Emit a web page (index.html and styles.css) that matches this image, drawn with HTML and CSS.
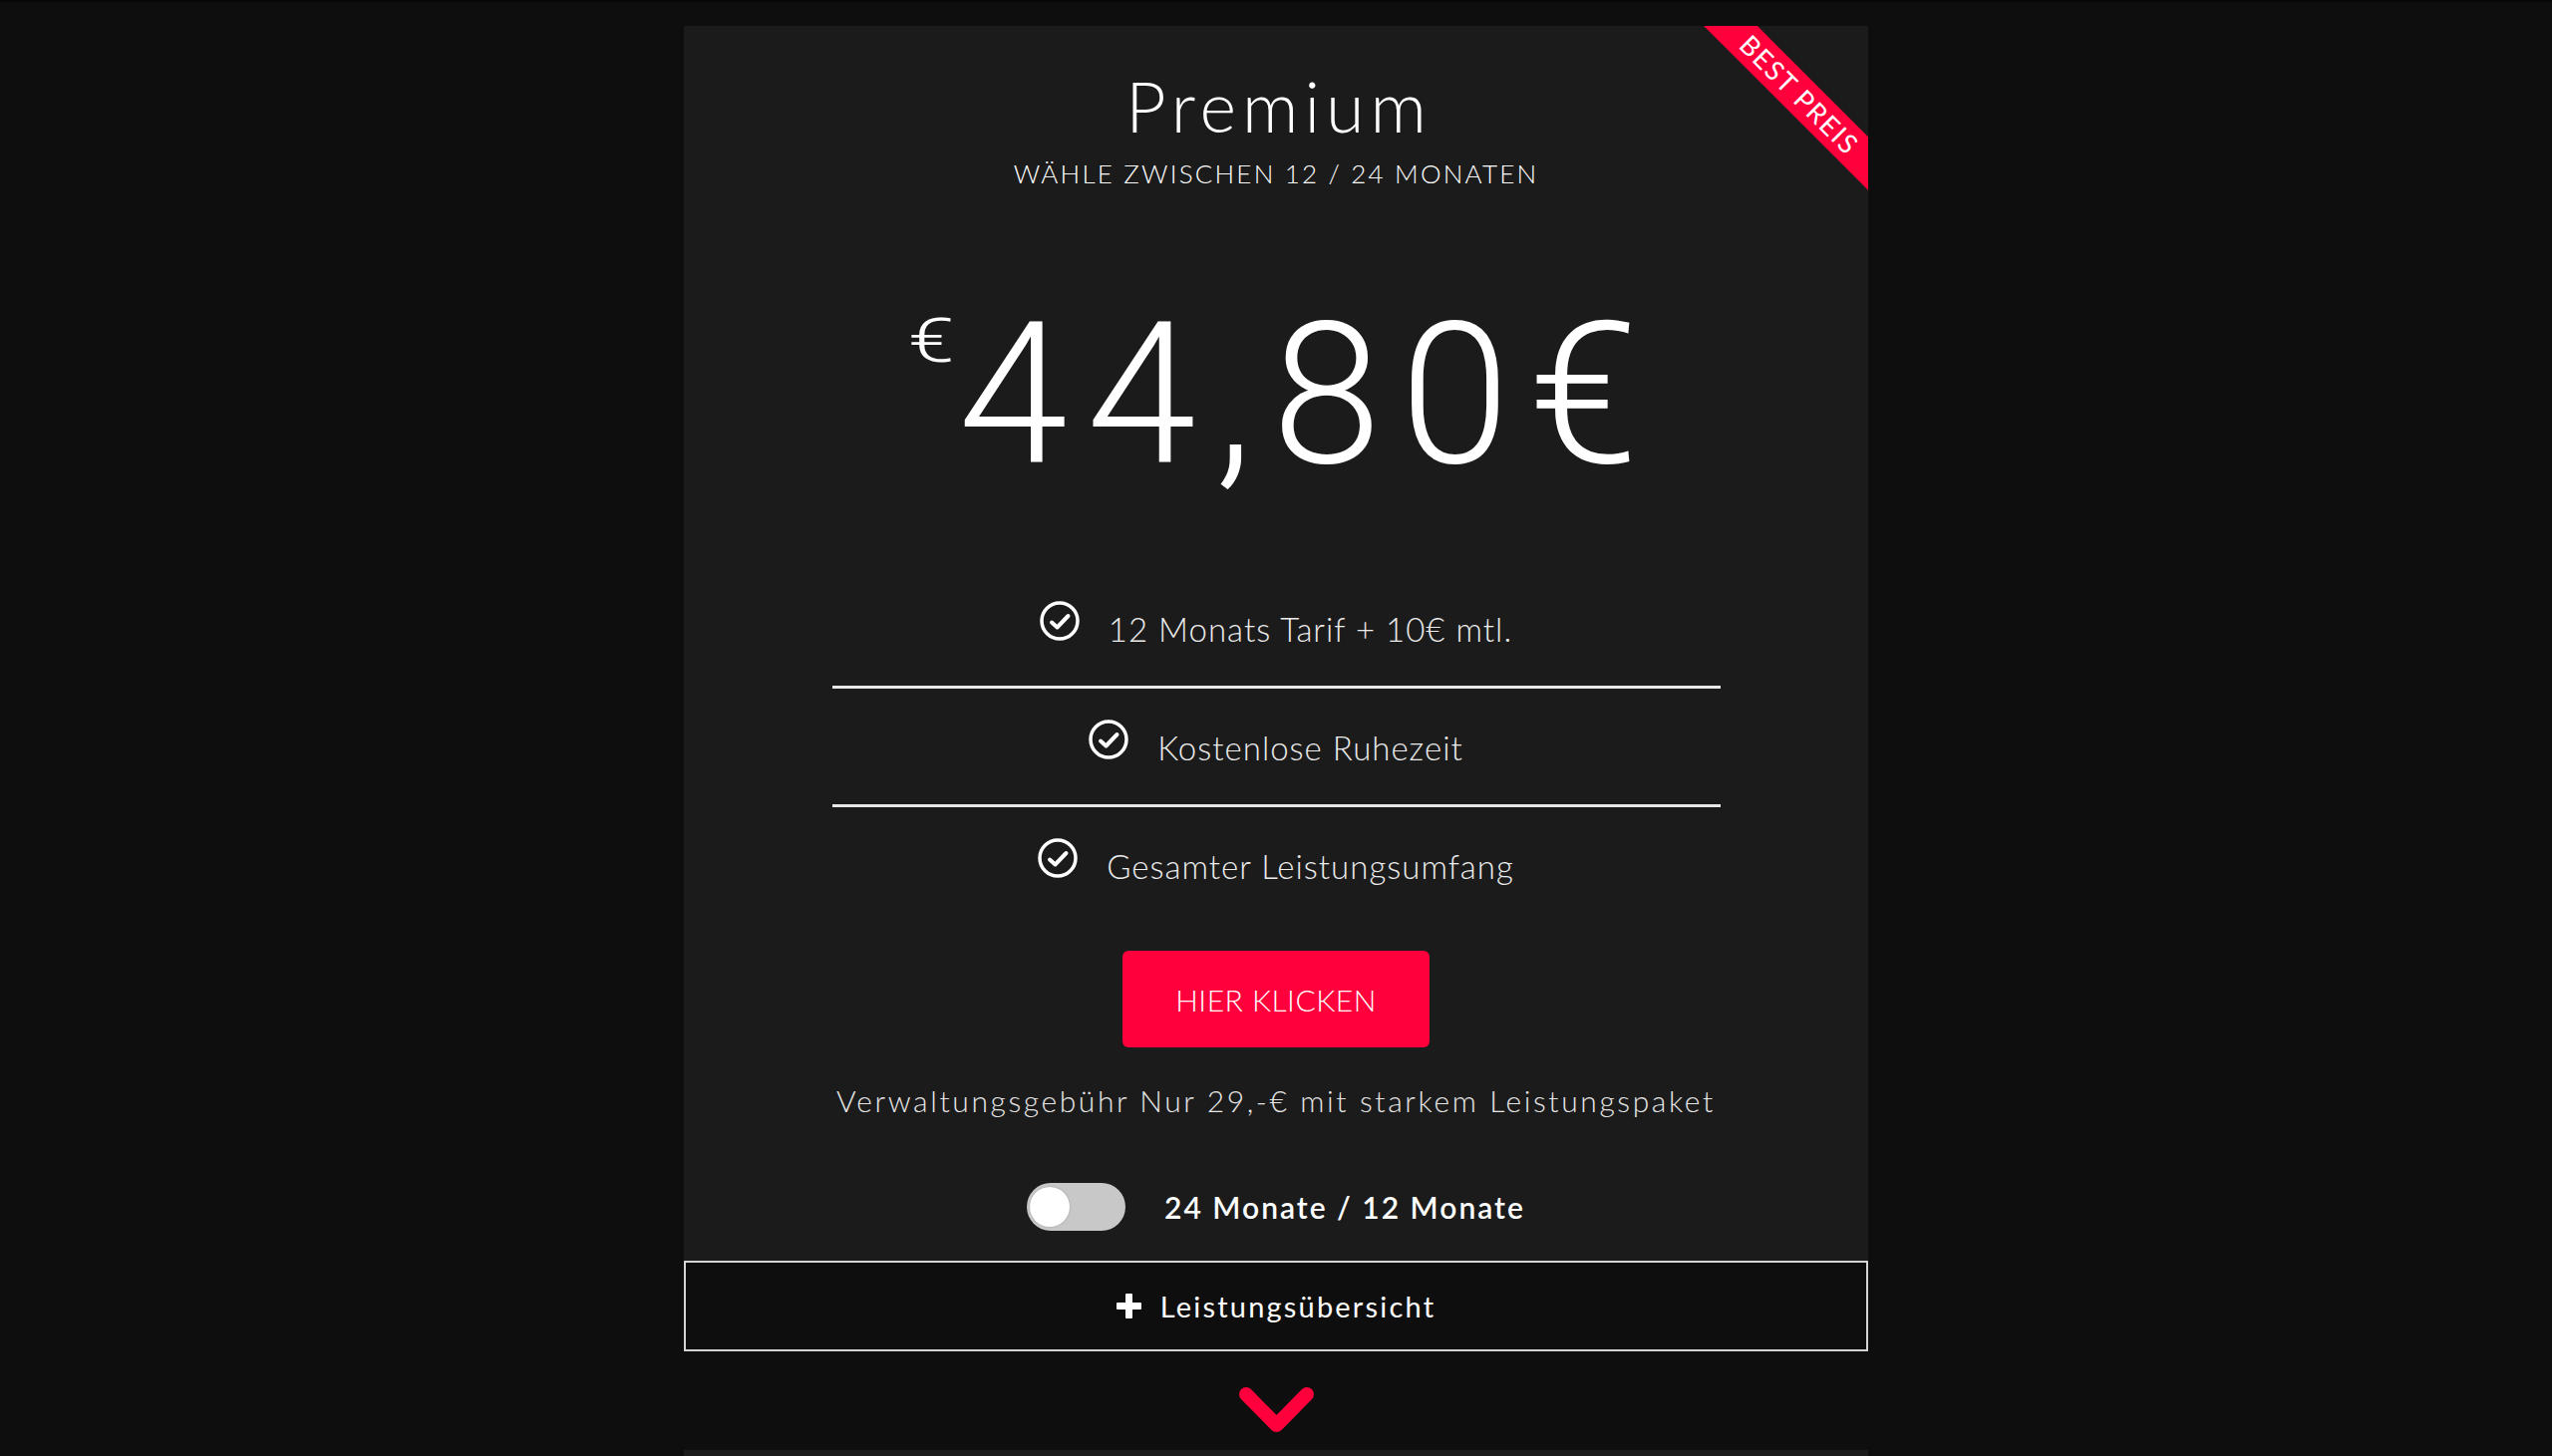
FILE: index.html
```html
<!DOCTYPE html>
<html lang="de">
<head>
<meta charset="utf-8">
<title>Premium</title>
<link rel="stylesheet" href="styles.css">
</head>
<body>
<div class="page">
  <section class="card">
    <div class="ribbon">BEST PREIS</div>
    <h1 class="title">Premium</h1>
    <p class="subtitle">WÄHLE ZWISCHEN 12 / 24 MONATEN</p>
    <div class="price"><span class="cur">€</span><span class="amount">44,80€</span></div>
    <ul class="features">
      <li class="feature">
        <svg class="check" viewBox="0 0 40 40" width="40" height="40"><circle cx="20" cy="20" r="18" fill="none" stroke="#fff" stroke-width="3.5"/><path d="M12 21.5 L17.5 26.5 L28.5 15" fill="none" stroke="#fff" stroke-width="4" stroke-linecap="round" stroke-linejoin="round"/></svg>
        <span class="feature-text">12 Monats Tarif + 10€ mtl.</span>
      </li>
      <li class="feature">
        <svg class="check" viewBox="0 0 40 40" width="40" height="40"><circle cx="20" cy="20" r="18" fill="none" stroke="#fff" stroke-width="3.5"/><path d="M12 21.5 L17.5 26.5 L28.5 15" fill="none" stroke="#fff" stroke-width="4" stroke-linecap="round" stroke-linejoin="round"/></svg>
        <span class="feature-text">Kostenlose Ruhezeit</span>
      </li>
      <li class="feature">
        <svg class="check" viewBox="0 0 40 40" width="40" height="40"><circle cx="20" cy="20" r="18" fill="none" stroke="#fff" stroke-width="3.5"/><path d="M12 21.5 L17.5 26.5 L28.5 15" fill="none" stroke="#fff" stroke-width="4" stroke-linecap="round" stroke-linejoin="round"/></svg>
        <span class="feature-text">Gesamter Leistungsumfang</span>
      </li>
    </ul>
    <a class="cta" href="#">HIER KLICKEN</a>
    <p class="note">Verwaltungsgebühr Nur 29,-€ mit starkem Leistungspaket</p>
    <div class="switch-row">
      <span class="switch"><span class="knob"></span></span>
      <span class="switch-label">24 Monate / 12 Monate</span>
    </div>
  </section>
  <div class="accordion">
    <svg class="plus" viewBox="0 0 25 25" width="25" height="25"><rect x="9" y="0" width="7" height="25" rx="1" fill="#fff"/><rect x="0" y="9" width="25" height="7" rx="1" fill="#fff"/></svg>
    <span class="accordion-label">Leistungsübersicht</span>
  </div>
  <div class="chevron">
    <svg viewBox="0 0 75 46" width="75" height="46"><polyline points="7,7 37.5,38 68,7" fill="none" stroke="#ff003c" stroke-width="14" stroke-linecap="round" stroke-linejoin="round"/></svg>
  </div>
  <section class="card card-next"></section>
</div>
</body>
</html>
```
FILE: styles.css
```css
html, body {
  margin: 0;
  padding: 0;
}
body {
  background: #0e0e0e;
  border-top: 2px solid #080808;
  font-family: "Lato", "Open Sans", sans-serif;
  color: #fff;
  overflow: hidden;
}
.page {
  padding-top: 24px;
  display: flex;
  flex-direction: column;
  align-items: center;
}
.card {
  position: relative;
  overflow: hidden;
  width: 1188px;
  box-sizing: border-box;
  background: #1b1b1b;
  padding: 38px 0 30px;
  text-align: center;
}
.ribbon {
  position: absolute;
  top: 50px;
  right: -81px;
  width: 300px;
  height: 38px;
  line-height: 38px;
  background: #ff003c;
  color: #fff;
  font-size: 27px;
  font-weight: 400;
  letter-spacing: 1.5px;
  text-align: center;
  transform: rotate(45deg);
}
.title {
  margin: 0;
  font-size: 70px;
  line-height: 84px;
  font-weight: 300;
  letter-spacing: 6px;
  margin-right: -6px;
}
.subtitle {
  margin: 11px 0 0;
  font-size: 26px;
  line-height: 31px;
  font-weight: 300;
  letter-spacing: 2.2px;
}
.price {
  margin-top: 107px;
  display: flex;
  justify-content: center;
  align-items: flex-start;
  gap: 10px;
  font-family: "Roboto", "Liberation Sans", sans-serif;
  font-weight: 300;
}
.cur {
  font-size: 62px;
  line-height: 62px;
  margin-top: 14px;
  display: inline-block;
  transform: scaleX(1.35);
}
.amount {
  font-size: 198px;
  line-height: 198px;
  letter-spacing: 19px;
  margin-right: -19px;
}
.features {
  list-style: none;
  margin: 108px auto 0;
  padding: 0;
  width: 891px;
}
.feature {
  display: flex;
  justify-content: center;
  align-items: flex-end;
  gap: 29px;
  padding: 31px 0 37px;
  border-bottom: 3px solid #e8e8e8;
}
.feature:first-child {
  padding-top: 0;
}
.feature:last-child {
  border-bottom: none;
  padding-bottom: 0;
}
.check {
  display: block;
  margin-bottom: 8px;
  flex: none;
}
.feature-text {
  font-size: 33px;
  line-height: 40px;
  font-weight: 300;
  letter-spacing: 1px;
  color: #ececec;
}
.cta {
  display: flex;
  align-items: center;
  justify-content: center;
  width: 308px;
  height: 97px;
  margin: 65px auto 0;
  background: #ff003c;
  border-radius: 6px;
  color: #fff;
  text-decoration: none;
  font-size: 30px;
  font-weight: 300;
  letter-spacing: 0.5px;
}
.note {
  margin: 36px 0 0;
  font-size: 30px;
  line-height: 34px;
  font-weight: 300;
  letter-spacing: 2.6px;
  color: #e6e6e6;
}
.switch-row {
  margin-top: 66px;
  display: flex;
  justify-content: center;
  align-items: center;
  gap: 39px;
}
.switch {
  position: relative;
  display: block;
  width: 99px;
  height: 48px;
  border-radius: 24px;
  background: #c8c8c9;
}
.knob {
  position: absolute;
  left: 3px;
  top: 4px;
  width: 40px;
  height: 40px;
  border-radius: 50%;
  background: #fff;
  box-shadow: 0 0 2px rgba(0,0,0,0.25);
}
.switch-label {
  font-size: 30px;
  line-height: 36px;
  font-weight: 600;
  letter-spacing: 2px;
}
.accordion {
  width: 1188px;
  height: 91px;
  box-sizing: border-box;
  border: 2px solid #d4d4d4;
  background: #0e0e0e;
  display: flex;
  justify-content: center;
  align-items: center;
  gap: 19px;
}
.plus {
  display: block;
}
.accordion-label {
  font-size: 29px;
  line-height: 34px;
  font-weight: 400;
  letter-spacing: 2.2px;
}
.chevron {
  margin: 36px 0 17px;
}
.chevron svg {
  display: block;
}
.card-next {
  height: 200px;
  padding: 0;
}
```
